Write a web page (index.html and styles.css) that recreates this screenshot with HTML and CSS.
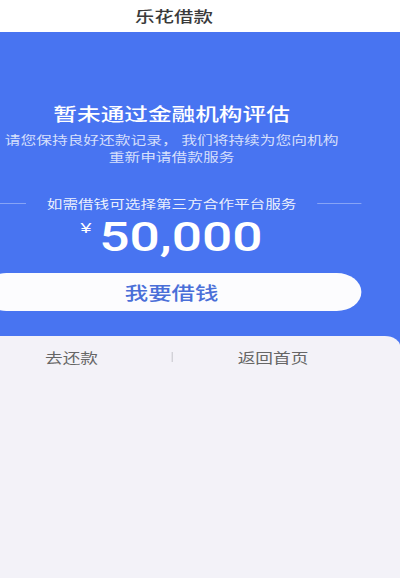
FILE: index.html
```html
<!DOCTYPE html>
<html lang="zh-CN">
<head>
<meta charset="utf-8">
<title>乐花借款</title>
<link rel="stylesheet" href="styles.css">
</head>
<body>
<div class="app">
  <header class="topbar"><span class="topbar-title">乐花借款</span></header>
  <section class="hero">
    <div class="hero-inner">
      <h1 class="hero-title">暂未通过金融机构评估</h1>
      <p class="hero-sub">请您保持良好还款记录， 我们将持续为您向机构<br>重新申请借款服务</p>
      <div class="hint-row">
        <span class="hint-line"></span>
        <span class="hint-text">如需借钱可选择第三方合作平台服务</span>
        <span class="hint-line"></span>
      </div>
      <div class="amount"><span class="currency">¥</span><span class="amount-num">50,000</span></div>
      <button class="borrow-btn">我要借钱</button>
    </div>
  </section>
  <section class="bottom">
    <div class="panel">
      <div class="panel-row">
        <span class="panel-link">去还款</span>
        <span class="panel-divider"></span>
        <span class="panel-link">返回首页</span>
      </div>
    </div>
  </section>
</div>
</body>
</html>
```
FILE: styles.css
```css
html, body {
  margin: 0;
  padding: 0;
}
body {
  width: 400px;
  height: 578px;
  overflow: hidden;
  background: #f3f2f8;
  font-family: "Noto Sans CJK SC", "Noto Sans", sans-serif;
}
.app {
  width: 307.7px;
  height: 578px;
  transform: scaleX(1.3);
  transform-origin: 0 0;
  display: flex;
  flex-direction: column;
}
.topbar {
  height: 32px;
  flex: none;
  background: #ffffff;
  display: flex;
  align-items: center;
  justify-content: center;
  padding-right: 40px;
}
.topbar-title {
  font-size: 15px;
  line-height: 20px;
  font-weight: 500;
  color: #3a3a3a;
}
.hero {
  height: 304px;
  flex: none;
  background: #4874f1;
  display: flex;
  flex-direction: column;
}
.hero-inner {
  margin-left: -14px;
  width: 292px;
  display: flex;
  flex-direction: column;
  align-items: center;
}
.hero-title {
  margin: 69px 0 0;
  font-size: 18.2px;
  line-height: 24px;
  font-weight: 500;
  color: #ffffff;
  white-space: nowrap;
}
.hero-sub {
  margin: 6px 0 0;
  font-size: 12.1px;
  line-height: 17px;
  color: rgba(255, 255, 255, 0.78);
  text-align: center;
  white-space: nowrap;
}
.hint-row {
  margin-top: 30px;
  width: 100%;
  display: flex;
  align-items: center;
  gap: 16px;
}
.hint-line {
  flex: 1;
  height: 1px;
  background: rgba(255, 255, 255, 0.35);
}
.hint-text {
  font-size: 12px;
  line-height: 17px;
  color: rgba(255, 255, 255, 0.9);
  white-space: nowrap;
}
.amount {
  margin-top: 5px;
  display: flex;
  align-items: flex-start;
  color: #ffffff;
}
.currency {
  font-family: "Liberation Sans", sans-serif;
  font-size: 15px;
  line-height: 16px;
  margin-top: 3px;
  margin-right: 6px;
}
.amount-num {
  font-family: Roboto, "Liberation Sans", sans-serif;
  font-weight: 500;
  font-size: 41px;
  line-height: 41px;
}
.borrow-btn {
  margin-top: 15px;
  width: 292px;
  height: 38px;
  border: none;
  border-radius: 19px;
  background: #fcfcfe;
  color: #4a6fd8;
  font-family: "Noto Sans CJK SC", sans-serif;
  font-size: 18px;
  font-weight: 500;
  line-height: 38px;
  padding: 0;
}
.bottom {
  flex: 1;
  background: #4874f1;
  display: flex;
}
.panel {
  flex: 1;
  background: #f3f2f8;
  border-top-right-radius: 12px 11px;
}
.panel-row {
  margin-left: -22px;
  width: 309px;
  height: 42px;
  display: grid;
  grid-template-columns: 1fr 1px 1fr;
  align-items: center;
}
.panel-link {
  text-align: center;
  font-size: 13.6px;
  line-height: 20px;
  color: #666666;
}
.panel-divider {
  height: 10px;
  background: #cfcfd4;
}
```
